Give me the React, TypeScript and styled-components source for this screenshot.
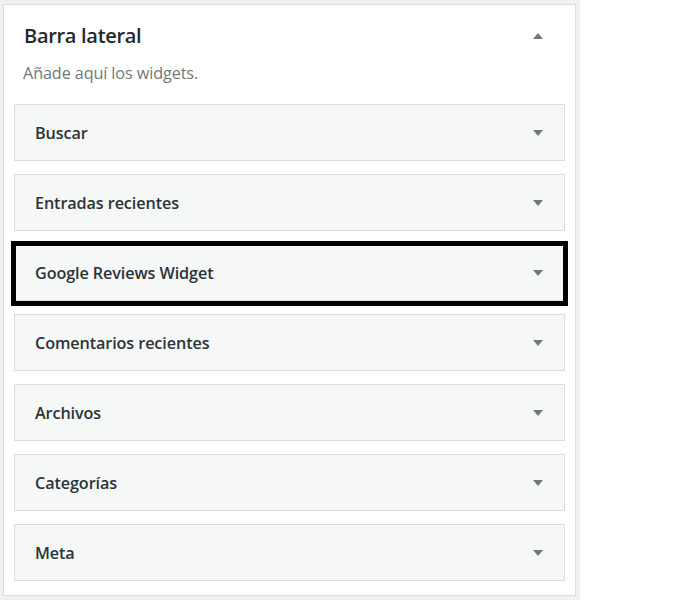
import styled, { createGlobalStyle } from 'styled-components'

const GlobalStyle = createGlobalStyle`
  * {
    box-sizing: border-box;
  }
  body {
    margin: 0;
    background: #fff;
    font-family: 'Open Sans', 'Noto Sans', sans-serif;
  }
`

const Backdrop = styled.div`
  width: 580px;
  height: 600px;
  padding: 4px 4px 0 3px;
  background: #f1f1f1;
`

const Panel = styled.section`
  height: 592px;
  background: #fff;
  border: 1px solid #dcdcde;
`

const Header = styled.div`
  display: flex;
  align-items: center;
  justify-content: space-between;
  padding: 20px 32px 0 20px;
  height: 42px;
`

const Title = styled.h2`
  margin: 0;
  font-size: 20px;
  line-height: 26px;
  font-weight: 600;
  color: #23282d;
  letter-spacing: -0.3px;
`

const Description = styled.p`
  margin: 16px 0 0 19px;
  font-size: 16.2px;
  line-height: 20px;
  color: #72777c;
  letter-spacing: -0.1px;
`

const WidgetList = styled.div`
  display: flex;
  flex-direction: column;
  gap: 13px;
  margin: 21px 10px 0 10px;
`

const Widget = styled.div<{ $highlighted?: boolean }>`
  position: relative;
  display: flex;
  align-items: center;
  justify-content: space-between;
  height: 57px;
  padding: 0 21px 0 20px;
  background: #f6f7f7;
  border: 1px solid #dcdcde;

  ${p =>
    p.$highlighted &&
    `
    &::after {
      content: '';
      position: absolute;
      top: -4px;
      left: -4px;
      right: -4px;
      bottom: -6px;
      border: 5px solid #000;
      pointer-events: none;
    }
  `}
`

const WidgetName = styled.span`
  font-size: 16.2px;
  font-weight: 600;
  color: #2c3338;
  letter-spacing: -0.1px;
`

const Arrow = styled.span<{ $up?: boolean }>`
  width: 0;
  height: 0;
  border-left: 5px solid transparent;
  border-right: 5px solid transparent;
  ${p =>
    p.$up ? 'border-bottom: 6px solid #72777c;' : 'border-top: 6px solid #72777c;'}
`

const widgets = [
  'Buscar',
  'Entradas recientes',
  'Google Reviews Widget',
  'Comentarios recientes',
  'Archivos',
  'Categorías',
  'Meta',
]

export default function App() {
  return (
    <>
      <GlobalStyle />
      <Backdrop>
        <Panel>
          <Header>
            <Title>Barra lateral</Title>
            <Arrow $up />
          </Header>
          <Description>Añade aquí los widgets.</Description>
          <WidgetList>
            {widgets.map(name => (
              <Widget key={name} $highlighted={name === 'Google Reviews Widget'}>
                <WidgetName>{name}</WidgetName>
                <Arrow />
              </Widget>
            ))}
          </WidgetList>
        </Panel>
      </Backdrop>
    </>
  )
}
